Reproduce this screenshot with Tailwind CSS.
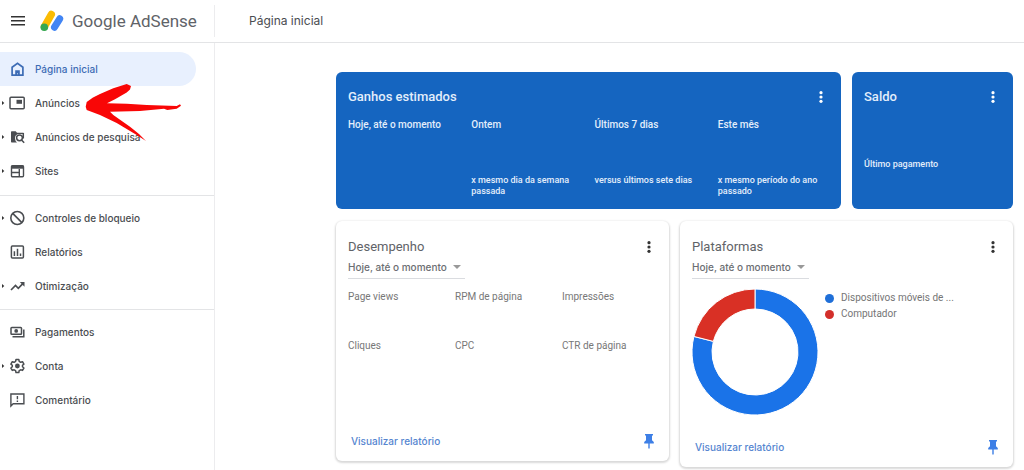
<!DOCTYPE html>
<html lang="pt-BR">
<head>
<meta charset="utf-8">
<title>Google AdSense</title>
<script src="https://cdn.jsdelivr.net/npm/@tailwindcss/browser@4"></script>
</head>
<body class="min-h-screen flex flex-col bg-white font-[Inter,sans-serif] text-[#5f6368] overflow-x-hidden">
<svg class="hidden">
  <symbol id="dots" viewBox="0 0 4 12"><circle cx="2" cy="1.7" r="1.6"/><circle cx="2" cy="6" r="1.6"/><circle cx="2" cy="10.3" r="1.6"/></symbol>
  <symbol id="pin" viewBox="0 0 10 15"><path d="M1 0h8v1.6H8v4.6l1.8 1.8v1.4H5.7V14L5 15l-.7-1V9.400H.2V8L2 6.200V1.600H1z"/></symbol>
  <symbol id="caret" viewBox="0 0 3 6"><path d="M0 1 2.300 3 0 5z"/></symbol>
</svg>

<header class="flex items-center h-[43px] border-b border-[#e3e4e6]">
  <div class="flex items-center w-[215px] h-8 pl-[11px] border-r border-[#ececee] shrink-0">
    <button aria-label="Menu" class="w-[14px] h-3">
      <svg viewBox="0 0 14 12" class="w-full h-full" fill="#333"><path d="M0 1h14v1.500H0zM0 5h14v1.500H0zM0 9h14v1.500H0z"/></svg>
    </button>
    <a href="#" class="flex items-center ml-[15px] gap-2">
      <svg viewBox="0 0 24 22" class="w-6 h-[22px]" stroke-linecap="round">
        <path d="M4.500 16.500 11.300 4.500" stroke="#fbbc04" stroke-width="7.400"/>
        <circle cx="4.300" cy="17.200" r="3.800" fill="#34a853"/>
        <path d="M14.500 17.200 19.700 8.800" stroke="#4285f4" stroke-width="7"/>
      </svg>
      <span class="text-[17px] leading-5 whitespace-nowrap font-[Roboto,sans-serif]">Google AdSense</span>
    </a>
  </div>
  <h1 class="pl-[34px] text-[12px] leading-5 text-[#4a4d51]">Página inicial</h1>
</header>

<div class="flex flex-1">
  <nav class="relative w-[215px] shrink-0 border-r border-[#ececee] pt-[9px] text-[10px] leading-4 font-medium text-[#4a4d51]">
    <ul class="pr-[18px]">
      <li><a href="#" class="flex items-center h-[34px] rounded-r-full bg-[#e8f0fe] text-[#3d6cb5]">
        <svg viewBox="0 0 16 16" class="ml-[9px] w-4 h-4" fill="none" stroke="currentColor" stroke-width="1.700"><path d="M3.100 14.100V6.300L8.500 2.300l5.400 4v7.800z"/><path d="M6.200 14.500V9.300h4.600v5.200H8.900v-2.200h-.8v2.200z" fill="currentColor" stroke="none"/></svg>
        <span class="ml-[10px]">Página inicial</span></a></li>
      <li><a href="#" class="flex items-center h-[34px]">
        <svg class="w-[3px] h-[6px] ml-[2px] mr-1" fill="#333"><use href="#caret"/></svg>
        <svg viewBox="0 0 16 16" class="w-4 h-4" fill="none" stroke="currentColor" stroke-width="1.500"><rect x="1" y="2.300" width="14.200" height="11.400" rx="1"/><path d="M7.500 4.800h5.500v4H7.500z" fill="currentColor" stroke="none"/></svg>
        <span class="ml-[10px]">Anúncios</span></a></li>
      <li><a href="#" class="flex items-center h-[34px]">
        <svg class="w-[3px] h-[6px] ml-[2px] mr-1" fill="#333"><use href="#caret"/></svg>
        <svg viewBox="0 0 16 16" class="w-4 h-4" fill="none" stroke="currentColor" stroke-width="1.500"><path d="M2 3q0-.7.700-.7h4L8 3.700h6.500V5H9Q6 6 6 9t2 4.500H2.700Q2 13.500 2 12.800z" fill="currentColor" stroke="none"/><circle cx="10.500" cy="8.800" r="2.900"/><path d="M12.500 10.900l2.700 2.900M14.300 4v5.500"/></svg>
        <span class="ml-[10px]">Anúncios de pesquisa</span></a></li>
      <li><a href="#" class="flex items-center h-[34px]">
        <svg class="w-[3px] h-[6px] ml-[2px] mr-1" fill="#333"><use href="#caret"/></svg>
        <svg viewBox="0 0 16 16" class="w-4 h-4" fill="none" stroke="currentColor" stroke-width="1.400"><rect x="2.500" y="2.700" width="12" height="11" rx="1"/><path d="M2 2.700h13v3H2z" fill="currentColor" stroke="none"/><path d="M2.500 9.500h7.500M10.300 6v7.500"/></svg>
        <span class="ml-[10px]">Sites</span></a></li>
    </ul>
    <hr class="mt-[7px] mb-[5px] border-[#e3e4e6]">
    <ul class="pr-[18px]">
      <li><a href="#" class="flex items-center h-[34px]">
        <svg class="w-[3px] h-[6px] ml-[2px] mr-1" fill="#333"><use href="#caret"/></svg>
        <svg viewBox="0 0 16 16" class="w-4 h-4" fill="none" stroke="currentColor" stroke-width="1.600"><circle cx="8.300" cy="8" r="6.500"/><path d="M3.700 3.400 12.900 12.600"/></svg>
        <span class="ml-[10px]">Controles de bloqueio</span></a></li>
      <li><a href="#" class="flex items-center h-[34px]">
        <svg viewBox="0 0 16 16" class="ml-[9px] w-4 h-4" fill="none" stroke="currentColor" stroke-width="1.500"><rect x="2.400" y="2" width="12" height="12" rx="1"/><path d="M5.400 7.200V12M8.500 4.800V12M11.500 9.500V12" /></svg>
        <span class="ml-[10px]">Relatórios</span></a></li>
      <li><a href="#" class="flex items-center h-[34px]">
        <svg class="w-[3px] h-[6px] ml-[2px] mr-1" fill="#333"><use href="#caret"/></svg>
        <svg viewBox="0 0 16 16" class="w-4 h-4" fill="none" stroke="currentColor" stroke-width="1.700"><path d="M2 12 6.500 7.500 9.300 10.300 14.300 5.200"/><path d="M10.800 4h4.700v4.700z" fill="currentColor" stroke="none"/></svg>
        <span class="ml-[10px]">Otimização</span></a></li>
    </ul>
    <hr class="mt-[6px] mb-[5px] border-[#e3e4e6]">
    <ul class="pr-[18px]">
      <li><a href="#" class="flex items-center h-[34px]">
        <svg viewBox="0 0 16 16" class="ml-[9px] w-4 h-4" fill="none" stroke="currentColor" stroke-width="1.500"><rect x="2" y="3.500" width="10.500" height="6.700" rx=".8"/><circle cx="7.200" cy="6.900" r="1.900" fill="currentColor" stroke="none"/><path d="M3.500 12.700h11.300V5.500"/></svg>
        <span class="ml-[10px]">Pagamentos</span></a></li>
      <li><a href="#" class="flex items-center h-[34px]">
        <svg class="w-[3px] h-[6px] ml-[2px] mr-1" fill="#333"><use href="#caret"/></svg>
        <svg viewBox="0 0 16 16" class="w-4 h-4" fill="none" stroke="currentColor" stroke-width="1.500" stroke-linejoin="round"><path d="M7 1.500h2.800l.4 1.900 1.500.9 1.800-.6 1.400 2.400L13.500 7.300v1.500l1.400 1.200-1.400 2.400-1.800-.6-1.500.9-.4 1.900H7l-.4-1.900-1.500-.9-1.800.6L1.900 10l1.400-1.200V7.300L1.900 6.100l1.400-2.400 1.800.6 1.500-.9z"/><circle cx="8.400" cy="8" r="2.400" fill="currentColor" stroke="none"/></svg>
        <span class="ml-[10px]">Conta</span></a></li>
      <li><a href="#" class="flex items-center h-[34px]">
        <svg viewBox="0 0 16 16" class="ml-[9px] w-4 h-4" fill="none" stroke="currentColor" stroke-width="1.400"><path d="M1.900 14V2h13v9.800H4.200z"/><path d="M8.400 4v3.300M8.400 8.500V10"/></svg>
        <span class="ml-[10px]">Comentário</span></a></li>
    </ul>
    <svg viewBox="0 0 98 58" class="absolute left-[85px] top-[41px] w-[98px] h-[58px]" fill="#f90606"><path d="M.7 22.700 1.700 18 8 13.500 15 10 28.300 4.300 41.700 0 46 2 45 5.500 41.700 8.500 30 15.300 22 19.300 41.700 19.700 61.700 21 91.700 22 95 20.300 96 21.700 91.700 24.700 82.300 26 79 24.800 55 27 25 27.700 28.300 31 45 42.700 54 50 61 57 51.700 51 31.700 39 15 31 1.700 26z"/></svg>
  </nav>

  <main class="grid grid-cols-4 gap-x-[11px] gap-y-3 flex-1 min-w-0 content-start items-start pt-[29px] pl-[121px] pr-[11px] font-[Roboto,sans-serif] text-[10px] leading-4">
    <section class="col-span-3 h-[137px] rounded-md bg-[#1565c0] text-[#e3eefb] pl-3 pt-4">
      <div class="flex items-center justify-between pr-[18px]">
        <h2 class="text-[13px] leading-[18px] font-medium">Ganhos estimados</h2>
        <button aria-label="Opções" class="w-1 h-3"><svg class="w-1 h-3" fill="#fff"><use href="#dots"/></svg></button>
      </div>
      <div class="grid grid-cols-4 mt-[11px] font-medium">
        <p>Hoje, até o momento</p><p>Ontem</p><p>Últimos 7 dias</p><p>Este mês</p>
      </div>
      <div class="grid grid-cols-4 mt-[42px] text-[9px] leading-[11px] font-medium">
        <p></p><p class="pr-4">x mesmo dia da semana passada</p><p class="pr-4">versus últimos sete dias</p><p class="pr-4">x mesmo período do ano passado</p>
      </div>
    </section>

    <section class="h-[137px] rounded-md bg-[#1565c0] text-[#e3eefb] pl-3 pt-4">
      <div class="flex items-center justify-between pr-[18px]">
        <h2 class="text-[13px] leading-[18px] font-medium">Saldo</h2>
        <button aria-label="Opções" class="w-1 h-3"><svg class="w-1 h-3" fill="#fff"><use href="#dots"/></svg></button>
      </div>
      <p class="mt-[53px] text-[9px] leading-[11px] font-medium">Último pagamento</p>
    </section>

    <section class="col-span-2 flex flex-col h-[240px] rounded-md shadow-[0_1px_2px_1px_rgba(0,0,0,0.15)] px-3 pt-[17px] pb-3">
      <div class="flex items-center justify-between pr-[6px]">
        <h2 class="text-[13px] leading-[18px]">Desempenho</h2>
        <button aria-label="Opções" class="w-1 h-3"><svg class="w-1 h-3" fill="#333"><use href="#dots"/></svg></button>
      </div>
      <div class="relative w-[117px] mt-[3px] border-b border-[#dadce0]">
        <select aria-label="Período de desempenho" class="appearance-none block w-full h-[19px] pb-[3px] text-[10px] leading-4 font-medium font-[Inter,sans-serif] text-[#6b6e72]"><option>Hoje, até o momento</option></select>
        <svg viewBox="0 0 8 4" class="absolute right-1 top-[6px] w-2 h-1 pointer-events-none" fill="#999"><path d="M0 0h8L4 4z"/></svg>
      </div>
      <dl class="grid grid-cols-[107px_107px_1fr] gap-y-[33px] mt-[10px] text-[#777]">
        <dt>Page views</dt><dt>RPM de página</dt><dt>Impressões</dt>
        <dt>Cliques</dt><dt>CPC</dt><dt>CTR de página</dt>
      </dl>
      <div class="flex items-center justify-between mt-auto pl-[3px] pr-[3px]">
        <a href="#" class="font-medium font-[Inter,sans-serif] text-[10px] text-[#5585d0]">Visualizar relatório</a>
        <button aria-label="Fixar" class="w-[10px] h-[15px]"><svg class="w-[10px] h-[15px]" fill="#3d7fe6"><use href="#pin"/></svg></button>
      </div>
    </section>

    <section class="col-span-2 flex flex-col h-[246px] rounded-md shadow-[0_1px_2px_1px_rgba(0,0,0,0.15)] px-3 pt-[17px] pb-3">
      <div class="flex items-center justify-between pr-[6px]">
        <h2 class="text-[13px] leading-[18px]">Plataformas</h2>
        <button aria-label="Opções" class="w-1 h-3"><svg class="w-1 h-3" fill="#333"><use href="#dots"/></svg></button>
      </div>
      <div class="relative w-[117px] mt-[3px] border-b border-[#dadce0]">
        <select aria-label="Período de plataformas" class="appearance-none block w-full h-[19px] pb-[3px] text-[10px] leading-4 font-medium font-[Inter,sans-serif] text-[#6b6e72]"><option>Hoje, até o momento</option></select>
        <svg viewBox="0 0 8 4" class="absolute right-1 top-[6px] w-2 h-1 pointer-events-none" fill="#999"><path d="M0 0h8L4 4z"/></svg>
      </div>
      <div class="flex mt-[10px]">
        <svg viewBox="0 0 126 126" class="w-[126px] h-[126px] shrink-0 overflow-visible" stroke="#fff" stroke-width="1">
          <path fill="#1a73e8" d="M63 0A63 63 0 1 1 1.950 47.440L21.330 52.380A43 43 0 1 0 63 20z"/>
          <path fill="#d93025" d="M63 0A63 63 0 0 0 1.950 47.440L21.330 52.380A43 43 0 0 1 63 20z"/>
        </svg>
        <ul class="pl-[7px] pt-px text-[#757575]">
          <li class="flex items-center gap-[7px]"><span class="size-[9px] rounded-full bg-[#1f6fd8]"></span>Dispositivos móveis de ...</li>
          <li class="flex items-center gap-[7px]"><span class="size-[9px] rounded-full bg-[#d32f2a]"></span>Computador</li>
        </ul>
      </div>
      <div class="flex items-center justify-between mt-auto pl-[3px] pr-[3px]">
        <a href="#" class="font-medium font-[Inter,sans-serif] text-[10px] text-[#5585d0]">Visualizar relatório</a>
        <button aria-label="Fixar" class="w-[10px] h-[15px]"><svg class="w-[10px] h-[15px]" fill="#3d7fe6"><use href="#pin"/></svg></button>
      </div>
    </section>
  </main>
</div>
</body>
</html>
